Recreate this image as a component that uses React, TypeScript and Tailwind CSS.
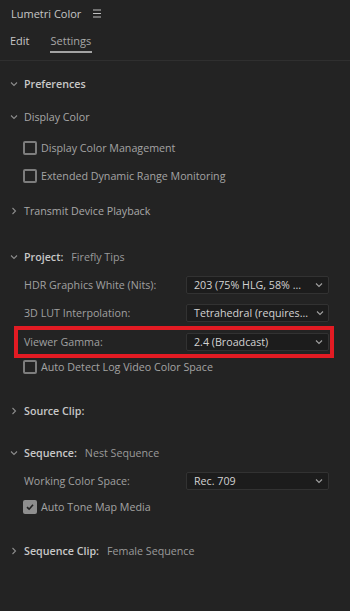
import { ReactNode } from "react";

const Chevron = ({ open }: { open: boolean }) => (
  <svg width="8" height="8" viewBox="0 0 8 8" className="shrink-0">
    {open ? (
      <path d="M1 2.5 L4 5.5 L7 2.5" fill="none" stroke="#8c8c8c" strokeWidth="1.1" />
    ) : (
      <path d="M2.5 1 L5.5 4 L2.5 7" fill="none" stroke="#8c8c8c" strokeWidth="1.1" />
    )}
  </svg>
);

const SectionRow = ({
  open,
  title,
  value,
  bold = true,
  className = "",
}: {
  open: boolean;
  title: string;
  value?: string;
  bold?: boolean;
  className?: string;
}) => (
  <div className={`flex h-5 items-center pl-[10px] ${className}`}>
    <Chevron open={open} />
    <span
      className={`ml-[6px] ${bold ? "font-semibold text-[#c8c8c8]" : "text-[#a8a8a8]"}`}
    >
      {title}
    </span>
    {value && <span className="ml-[8px] text-[#9a9a9a]">{value}</span>}
  </div>
);

const CheckRow = ({
  label,
  checked = false,
  className = "",
}: {
  label: string;
  checked?: boolean;
  className?: string;
}) => (
  <div className={`flex h-5 items-center pl-[23px] ${className}`}>
    {checked ? (
      <div className="flex h-[14px] w-[14px] items-center justify-center rounded-[2px] bg-[#8e8e8e]">
        <svg width="10" height="10" viewBox="0 0 10 10">
          <path d="M2 5.2 L4.1 7.2 L8 2.8" fill="none" stroke="#232323" strokeWidth="1.6" />
        </svg>
      </div>
    ) : (
      <div className="h-[14px] w-[14px] rounded-[2px] border-2 border-[#7d7d7d]" />
    )}
    <span className="ml-[4px] text-[#a3a3a3]">{label}</span>
  </div>
);

const Dropdown = ({ value }: { value: string }) => (
  <div className="flex h-[18px] w-[143px] items-center justify-between rounded-[2px] border border-[#323232] bg-[#1c1c1c] pl-[7px] pr-[5px]">
    <span className="whitespace-nowrap text-[#d2d2d2]">{value}</span>
    <svg width="8" height="8" viewBox="0 0 8 8" className="ml-2 shrink-0">
      <path d="M1 2.5 L4 5.5 L7 2.5" fill="none" stroke="#a0a0a0" strokeWidth="1.1" />
    </svg>
  </div>
);

const FieldRow = ({
  label,
  value,
  className = "",
}: {
  label: string;
  value: string;
  className?: string;
}) => (
  <div className={`flex h-5 items-center pl-[24px] ${className}`}>
    <span className="w-[162px] text-[#a0a0a0]">{label}</span>
    <Dropdown value={value} />
  </div>
);

const Highlight = ({ children, className = "" }: { children: ReactNode; className?: string }) => (
  <div className={`ml-[14px] w-[320px] border-4 border-[#e21b23] py-[2px] ${className}`}>{children}</div>
);

export default function App() {
  return (
    <div
      className="h-[611px] w-[350px] overflow-hidden bg-[#232323] text-[10.7px] leading-none"
      style={{ fontFamily: '"Open Sans", "Noto Sans", sans-serif' }}
    >
      {/* panel header */}
      <div className="flex h-[26px] items-center pl-[11px]">
        <span className="text-[11px] text-[#c6c6c6]">Lumetri Color</span>
        <svg width="8" height="9" viewBox="0 0 8 9" className="ml-[12px]">
          <path d="M0 1 H8 M0 4.5 H8 M0 8 H8" stroke="#c0c0c0" strokeWidth="1.1" />
        </svg>
      </div>
      <div className="flex h-[35px] items-start border-b border-[#2f2f2f] pl-[10px] pt-[8px]">
        <span className="mt-[1px] text-[11px] text-[#c6c6c6]">Edit</span>
        <div className="ml-[20px] flex flex-col items-center">
          <span className="mt-[1px] px-[1px] text-[11px] text-[#a8a8a8]">Settings</span>
          <div className="mt-[5px] h-[2px] w-full bg-[#a3a3a3]" />
        </div>
      </div>

      <SectionRow open title="Preferences" className="mt-[13px]" />
      <SectionRow open title="Display Color" bold={false} className="mt-[13px]" />
      <CheckRow label="Display Color Management" className="mt-[11px]" />
      <CheckRow label="Extended Dynamic Range Monitoring" className="mt-[8px]" />
      <SectionRow open={false} title="Transmit Device Playback" bold={false} className="mt-[15px]" />

      <SectionRow open title="Project:" value="Firefly Tips" className="mt-[26px]" />
      <FieldRow label="HDR Graphics White (Nits):" value="203 (75% HLG, 58% ..." className="mt-[8px]" />
      <FieldRow label="3D LUT Interpolation:" value="Tetrahedral (requires..." className="mt-[8px]" />
      <Highlight className="mt-[3px]">
        <div className="flex h-5 items-center pl-[6px]">
          <span className="w-[162px] text-[#a0a0a0]">Viewer Gamma:</span>
          <Dropdown value="2.4 (Broadcast)" />
        </div>
      </Highlight>
      <CheckRow label="Auto Detect Log Video Color Space" className="mt-[-1px]" />

      <SectionRow open={false} title="Source Clip:" className="mt-[24px]" />

      <SectionRow open title="Sequence:" value="Nest Sequence" className="mt-[22px]" />
      <FieldRow label="Working Color Space:" value="Rec. 709" className="mt-[8px]" />
      <CheckRow label="Auto Tone Map Media" checked className="mt-[6px]" />

      <SectionRow open={false} title="Sequence Clip:" value="Female Sequence" className="mt-[24px]" />
    </div>
  );
}
